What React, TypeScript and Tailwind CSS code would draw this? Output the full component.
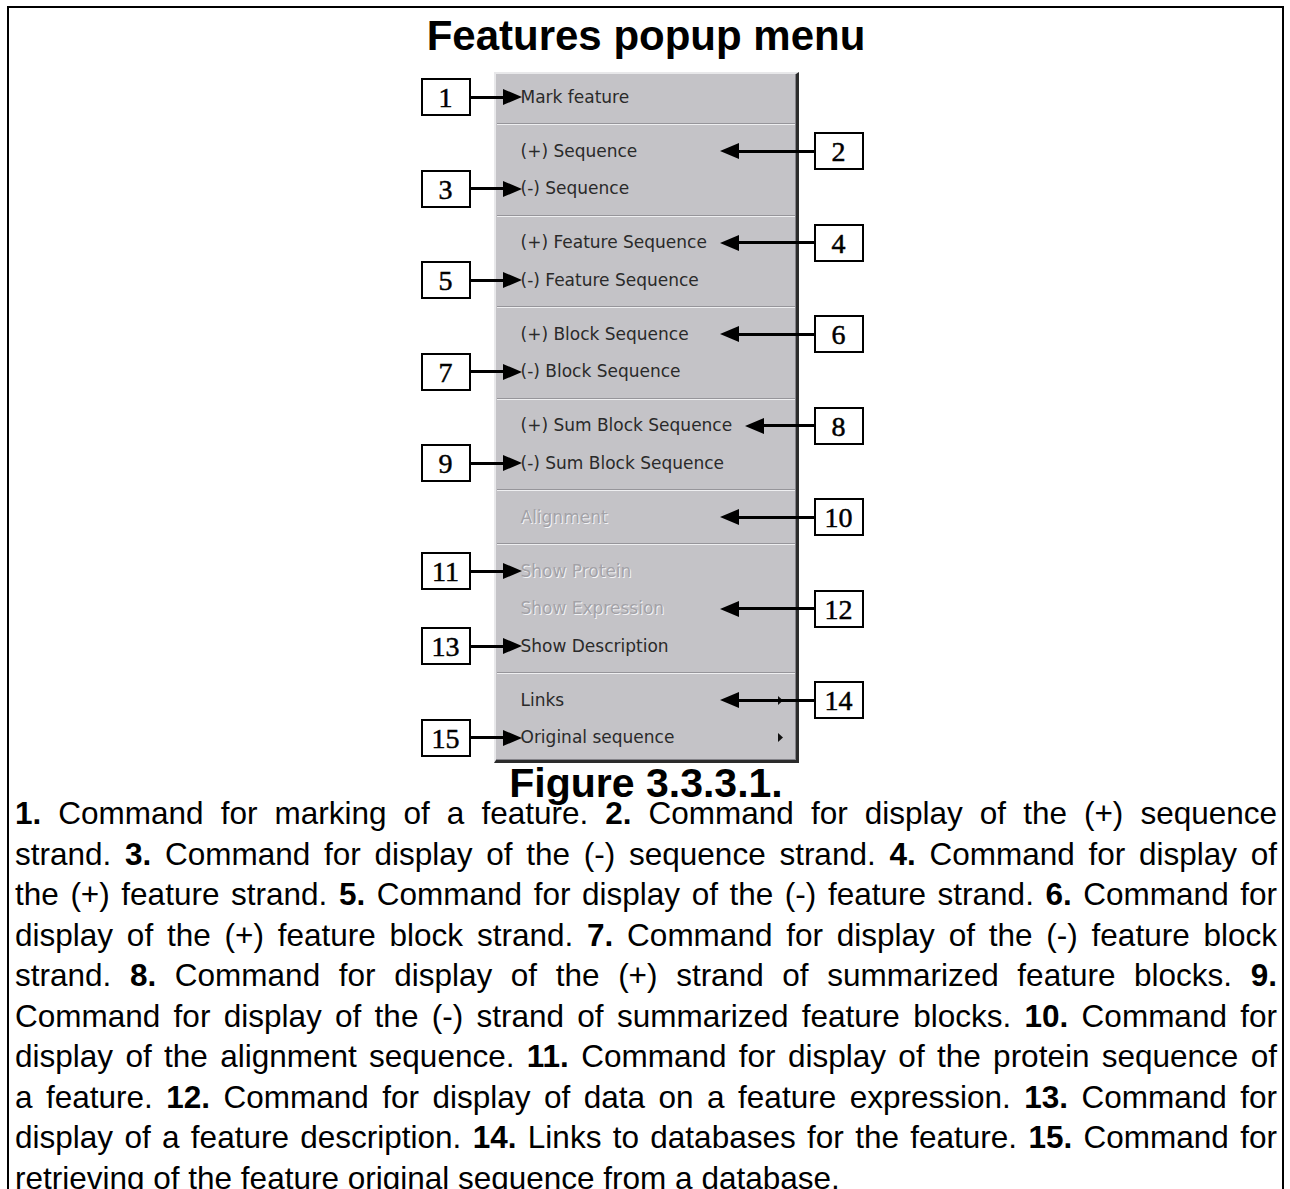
import React from 'react';

type Item = {
  label: string;
  n: number;
  side: 'left' | 'right';
  disabled?: boolean;
  sub?: boolean;
  pos?: string;
};

const groups: Item[][] = [
  [{ label: 'Mark feature', n: 1, side: 'left' }],
  [
    { label: '(+) Sequence', n: 2, side: 'right' },
    { label: '(-) Sequence', n: 3, side: 'left' },
  ],
  [
    { label: '(+) Feature Sequence', n: 4, side: 'right' },
    { label: '(-) Feature Sequence', n: 5, side: 'left' },
  ],
  [
    { label: '(+) Block Sequence', n: 6, side: 'right' },
    { label: '(-) Block Sequence', n: 7, side: 'left' },
  ],
  [
    { label: '(+) Sum Block Sequence', n: 8, side: 'right', pos: 'left-[249px] w-[119px]' },
    { label: '(-) Sum Block Sequence', n: 9, side: 'left' },
  ],
  [{ label: 'Alignment', n: 10, side: 'right', disabled: true }],
  [
    { label: 'Show Protein', n: 11, side: 'left', disabled: true },
    { label: 'Show Expression', n: 12, side: 'right', disabled: true },
    { label: 'Show Description', n: 13, side: 'left' },
  ],
  [
    { label: 'Links', n: 14, side: 'right', sub: true },
    { label: 'Original sequence', n: 15, side: 'left', sub: true },
  ],
];

function NumBox({ n }: { n: number }) {
  return (
    <div className="flex h-[38px] w-[50px] shrink-0 items-center justify-center border-2 border-black bg-white pt-[2px] font-['Liberation_Serif',serif] text-[28px] leading-none text-black [-webkit-text-stroke:0.5px_#000]">
      {n}
    </div>
  );
}

function Callout({ item }: { item: Item }) {
  if (item.side === 'left') {
    return (
      <div className="absolute left-[-75px] top-[-0.25px] flex h-[38px] w-[101px] items-center">
        <NumBox n={item.n} />
        <div className="h-[3px] flex-1 bg-black" />
        <svg width="19" height="16" viewBox="0 0 19 16" className="shrink-0">
          <path d="M0 0 L19 8 L0 16 Z" fill="#000" />
        </svg>
      </div>
    );
  }
  return (
    <div className={`absolute top-[-0.25px] flex h-[38px] items-center ${item.pos ?? 'left-[224px] w-[144px]'}`}>
      <svg width="19" height="16" viewBox="0 0 19 16" className="shrink-0">
        <path d="M19 0 L0 8 L19 16 Z" fill="#000" />
      </svg>
      <div className="h-[3px] flex-1 bg-black" />
      <NumBox n={item.n} />
    </div>
  );
}

function MenuItem({ item }: { item: Item }) {
  return (
    <div className="relative flex h-[37.5px] items-center pl-[25px] pr-[13px]">
      <span
        className={
          item.disabled
            ? 'flex-1 text-[#a3a2a7] [text-shadow:1px_1px_0_#f4f4f6]'
            : 'flex-1 text-[#2a2a2a]'
        }
      >
        {item.label}
      </span>
      {item.sub && (
        <svg width="5" height="9" viewBox="0 0 5 9">
          <path d="M0 0 L5 4.5 L0 9 Z" fill="#111" />
        </svg>
      )}
      <Callout item={item} />
    </div>
  );
}

function Separator() {
  return (
    <div className="flex h-[16.5px] items-center px-[1px]">
      <div className="w-full border-t border-b border-t-[#96959a] border-b-[#efeff1]" />
    </div>
  );
}

function PopupMenu() {
  return (
    <div className="relative mx-auto mt-[13px] w-[305px] border-t-2 border-l-2 border-r-[3px] border-b-[3px] border-t-[#e8e8ea] border-l-[#e8e8ea] border-r-[#2c2c2c] border-b-[#2c2c2c] bg-[#c4c3c7] pt-[4.25px] pb-[3.75px] font-['DejaVu_Sans',sans-serif] text-[17px] leading-none shadow-[inset_-1px_-1px_0_#85848a]">
      {groups.map((g, gi) => (
        <React.Fragment key={gi}>
          {gi > 0 && <Separator />}
          {g.map((it) => (
            <MenuItem key={it.n} item={it} />
          ))}
        </React.Fragment>
      ))}
    </div>
  );
}

const J = 'text-justify [text-align-last:justify]';

export default function App() {
  return (
    <div className="min-h-screen bg-white pt-[6px] pl-[7px] pr-[6px]">
      <div className="border-x-2 border-t-2 border-black pl-[6px] pr-[5px] pb-6 font-['Liberation_Sans',Arial,sans-serif] text-black">
        <h1 className="pt-[5px] text-center text-[42px] font-bold leading-[46px]">Features popup menu</h1>

        <PopupMenu />

        <h2 className="mt-[6px] text-center text-[41px] font-bold leading-[28px]">Figure 3.3.3.1.</h2>

        <div className="-mt-[4px] text-[31.5px] leading-[40.5px]">
          <div className={J}>
            <b>1.</b> Command for marking of a feature. <b>2.</b> Command for display of the (+) sequence
          </div>
          <div className={J}>
            strand. <b>3.</b> Command for display of the (-) sequence strand. <b>4.</b> Command for display of
          </div>
          <div className={J}>
            the (+) feature strand. <b>5.</b> Command for display of the (-) feature strand. <b>6.</b> Command for
          </div>
          <div className={J}>
            display of the (+) feature block strand. <b>7.</b> Command for display of the (-) feature block
          </div>
          <div className={J}>
            strand. <b>8.</b> Command for display of the (+) strand of summarized feature blocks. <b>9.</b>
          </div>
          <div className={J}>
            Command for display of the (-) strand of summarized feature blocks. <b>10.</b> Command for
          </div>
          <div className={J}>
            display of the alignment sequence. <b>11.</b> Command for display of the protein sequence of
          </div>
          <div className={J}>
            a feature. <b>12.</b> Command for display of data on a feature expression. <b>13.</b> Command for
          </div>
          <div className={J}>
            display of a feature description. <b>14.</b> Links to databases for the feature. <b>15.</b> Command for
          </div>
          <div>retrieving of the feature original sequence from a database.</div>
        </div>
      </div>
    </div>
  );
}
